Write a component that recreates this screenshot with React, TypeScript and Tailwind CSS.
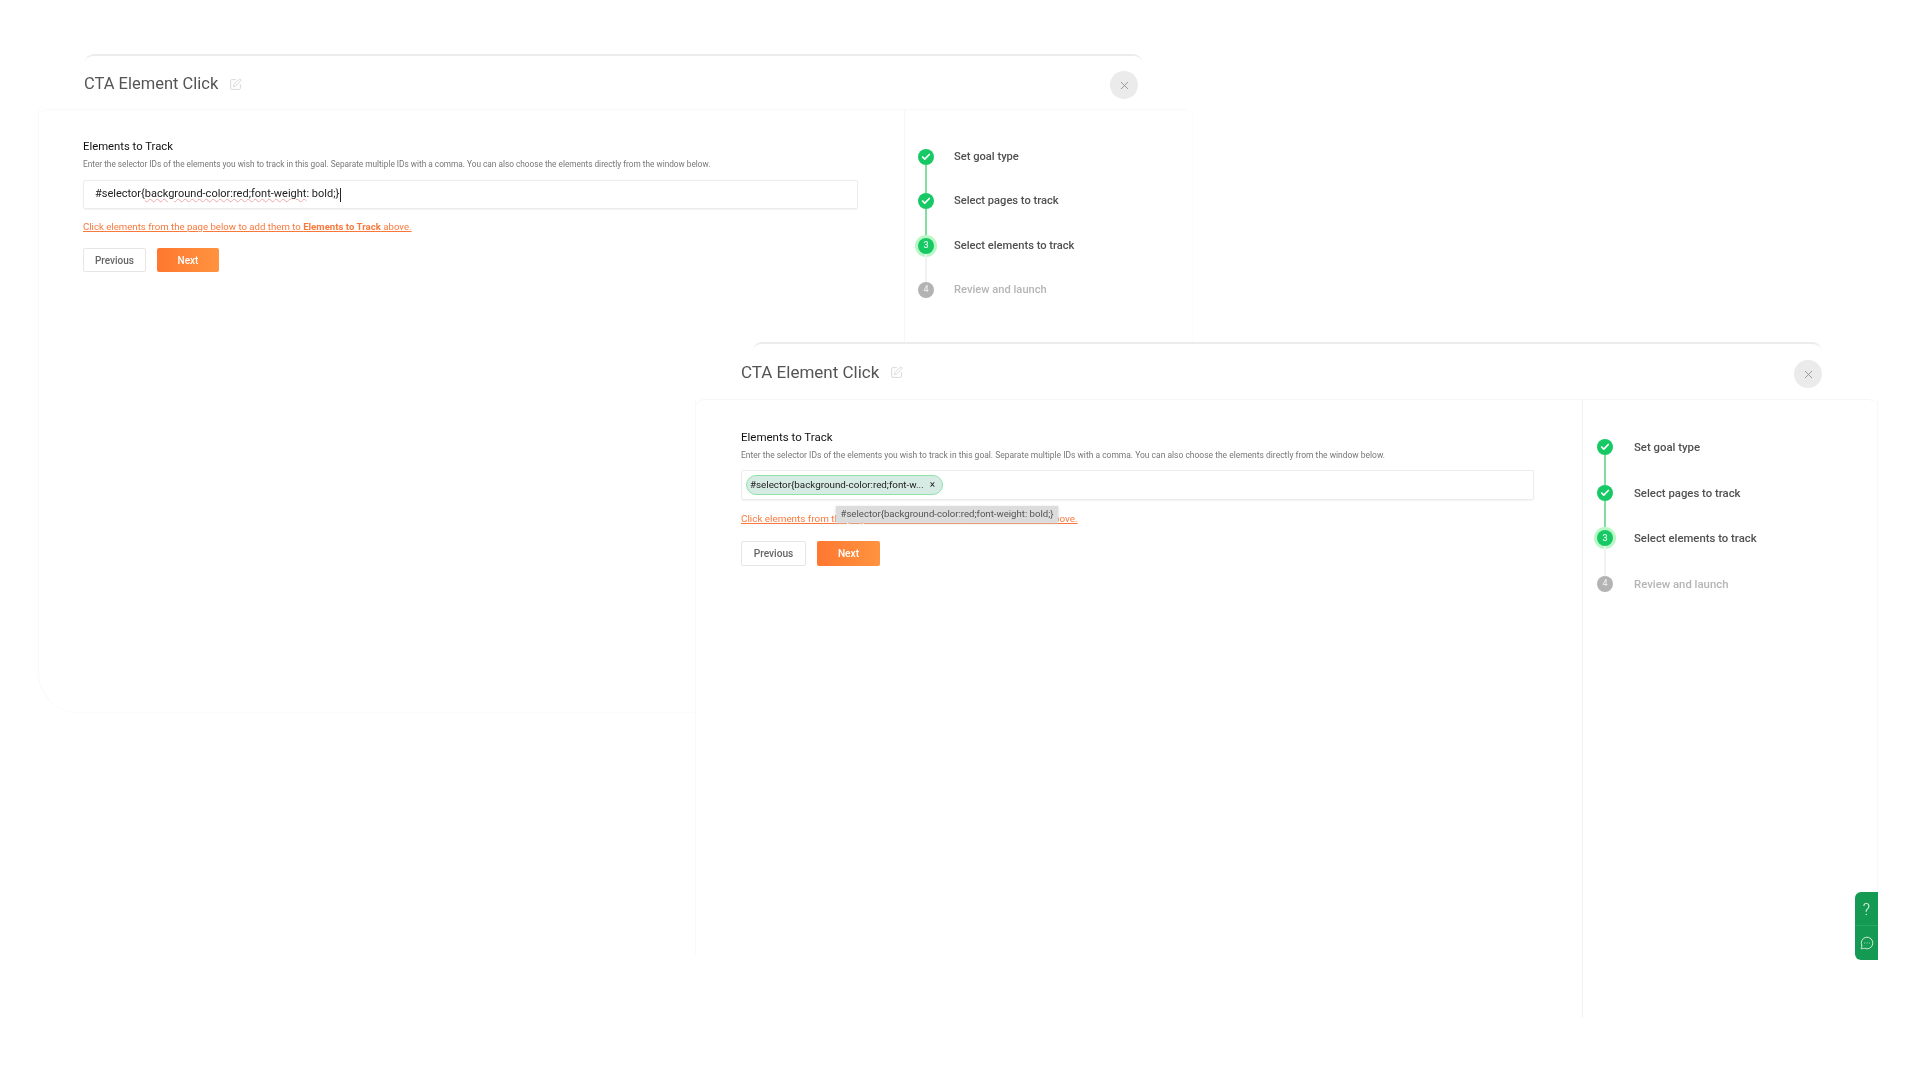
import React from "react";
import { Check, MessageCircleMore, SquarePen, X } from "lucide-react";

type StepProps = { label: string; state: "done" | "current" | "todo"; n: number; line?: string; lineH: string; text: string; gap: string };

function Step({ label, state, n, line, lineH, text, gap }: StepProps) {
  return (
    <div className={`flex items-start ${gap}`}>
      <div className="flex w-4 flex-col items-center">
        <div
          className={
            state === "todo"
              ? "flex h-4 w-4 items-center justify-center rounded-full bg-[#b3b3b3] text-[9px] font-medium text-[#e8e8e8]"
              : state === "current"
                ? "flex h-4 w-4 items-center justify-center rounded-full bg-[#17c964] text-[9px] font-medium text-[#d8f8e4] shadow-[0_0_0_3px_#b9f7c6]"
                : "flex h-4 w-4 items-center justify-center rounded-full bg-[#17c964] text-white"
          }
        >
          {state === "done" ? <Check size={10} strokeWidth={4} /> : n}
        </div>
        {line ? <div className={`w-0.5 ${lineH} ${line}`} /> : null}
      </div>
      <div className={`h-4 font-medium leading-4 ${text} ${state === "todo" ? "text-[#b5b5b5]" : "text-[#505050]"}`}>{label}</div>
    </div>
  );
}

function Steps({ lineH, text, gap }: { lineH: string; text: string; gap: string }) {
  const common = { lineH, text, gap };
  return (
    <div className="flex flex-col">
      <Step {...common} label="Set goal type" state="done" n={1} line="bg-[#7fdf9f]" />
      <Step {...common} label="Select pages to track" state="done" n={2} line="bg-[#7fdf9f]" />
      <Step {...common} label="Select elements to track" state="current" n={3} line="bg-[#f1f1f1]" />
      <Step {...common} label="Review and launch" state="todo" n={4} />
    </div>
  );
}

function Title({ className, icon }: { className: string; icon: number }) {
  return (
    <div className="flex items-center gap-[11px]">
      <span className={`text-[#555] ${className}`}>CTA Element Click</span>
      <SquarePen size={icon} strokeWidth={1.5} className="text-[#cfcfcf]" />
    </div>
  );
}

function CloseButton() {
  return (
    <div className="flex h-7 w-7 items-center justify-center rounded-full bg-[#ebebeb] text-[#8a8a8a]">
      <X size={13} strokeWidth={1.5} />
    </div>
  );
}

export default function App() {
  return (
    <div className="relative h-[1080px] w-[1920px] overflow-hidden bg-white font-['Roboto',sans-serif] blur-[0.3px]">
      {/* Back window */}
      <section className="absolute left-[38px] top-[54px] w-[1155px]">
        <div className="ml-[46px] mr-[50px] flex h-[55px] items-start justify-between rounded-t-[10px] border-t-2 border-[#ececec] pt-[15px]">
          <div className="mt-[1px]">
            <Title className="text-[16.5px] leading-6" icon={13} />
          </div>
          <div className="mr-[5px]"><CloseButton /></div>
        </div>
        <div className="flex h-[603px] items-start rounded-t-[10px] border-t border-[#f8f8f8]">
          <div className="h-[603px] w-[866px] shrink-0 rounded-bl-[40px] border-b border-l border-[#fcfcfc] border-l-[#f8f8f8] pl-[44px] pt-[29px]">
            <div className="text-[11.3px] font-normal leading-4 text-[#111]">Elements to Track</div>
            <div className="mt-[2px] text-[8.25px] leading-[14px] text-[#777]">
              Enter the selector IDs of the elements you wish to track in this goal. Separate multiple IDs with a comma. You can also choose the elements directly from the window below.
            </div>
            <div className="mt-[9px] flex h-[29px] w-[775px] items-center rounded-[2px] border border-[#ececec] pl-[11px] text-[11px] text-[#222] shadow-[0_1px_1px_#f4f4f4]">
              #selector{"{"}
              <span className="underline decoration-[#f2a8a8] decoration-wavy decoration-1">background-color:red;font-weight</span>: bold;{"}"}
              <span className="ml-px h-[14px] w-px bg-[#222]" />
            </div>
            <div className="mt-[10px] text-[9.65px] leading-4 text-[#f9793d] underline">
              Click elements from the page below to add them to <b className="font-bold">Elements to Track</b> above.
            </div>
            <div className="mt-[13px] flex gap-[11px]">
              <div className="flex h-6 w-[63px] items-center justify-center rounded-[2px] border border-[#e6e6e6] text-[10px] font-medium text-[#666]">Previous</div>
              <div className="flex h-6 w-[62px] items-center justify-center rounded-[2px] bg-gradient-to-r from-[#ff7730] to-[#ff933f] text-[10px] font-medium text-white">Next</div>
            </div>
          </div>
          <div className="h-[603px] flex-1 border-l border-r border-[#f6f6f6] border-r-[#fcfcfc] pl-[13px] pt-[39px]">
            <Steps lineH="h-[28.3px]" text="text-[11.15px]" gap="gap-[20px]" />
          </div>
        </div>
      </section>

      {/* Front window */}
      <section className="absolute left-[695px] top-[342px] h-[700px] w-[1183px] bg-white">
        <div className="ml-[57px] mr-[56px] flex h-[57px] items-start justify-between rounded-t-[10px] border-t-2 border-[#ececec] pt-[16px]">
          <div className="-ml-[11px]">
            <Title className="text-[17px] leading-6" icon={13} />
          </div>
          <div><CloseButton /></div>
        </div>
        <div className="flex items-start rounded-t-[10px] border-t border-[#f6f6f6]">
          <div className="h-[554px] w-[887px] shrink-0 border-l border-[#f8f8f8] pl-[45px] pt-[29px]">
            <div className="text-[11.5px] font-normal leading-4 text-[#111]">Elements to Track</div>
            <div className="mt-[3px] text-[8.48px] leading-[14px] text-[#777]">
              Enter the selector IDs of the elements you wish to track in this goal. Separate multiple IDs with a comma. You can also choose the elements directly from the window below.
            </div>
            <div className="relative mt-[8px] flex h-[30px] w-[793px] items-center rounded-[2px] border border-[#ececec] pl-[4px] shadow-[0_1px_1px_#f4f4f4]">
              <div className="flex h-5 w-[197px] items-center whitespace-nowrap rounded-full border border-[#8fe3a9] bg-[#d6ebe3] pl-[3px] text-[9.8px] text-[#222]">
                <span>#selector{"{"}background-color:red;font-w...</span>
                <span className="ml-[6px] text-[10px] leading-none">×</span>
              </div>
              <div className="absolute left-[94px] top-[35px] z-10 flex h-4 w-[222px] items-center justify-center whitespace-nowrap bg-[#dcdcdc] text-[9.6px] text-[#555] shadow-[0_1px_3px_#cfcfcf]">
                #selector{"{"}background-color:red;font-weight: bold;{"}"}
              </div>
            </div>
            <div className="mt-[11px] text-[9.9px] leading-4 text-[#f9793d] underline">
              Click elements from the page below to add them to <b className="font-medium">Elements to Track</b> above.
            </div>
            <div className="mt-[14px] flex gap-[11px]">
              <div className="flex h-[25px] w-[65px] items-center justify-center rounded-[2px] border border-[#e6e6e6] text-[10.2px] font-medium text-[#666]">Previous</div>
              <div className="flex h-[25px] w-[63px] items-center justify-center rounded-[2px] bg-gradient-to-r from-[#ff7730] to-[#ff933f] text-[10.2px] font-medium text-white">Next</div>
            </div>
          </div>
          <div className="h-[618px] flex-1 border-l border-[#f1f1f1] pl-[14px] pt-[39px]">
            <Steps lineH="h-[29.7px]" text="text-[11.35px]" gap="gap-[21px]" />
          </div>
        </div>
      </section>
      <div className="absolute right-[42px] top-[399px] h-[494px] w-px bg-[#f8f8f8]" />

      {/* Help widget */}
      <div className="absolute left-[1855px] top-[892px] flex h-[68px] w-[23px] flex-col rounded-l-[6px] bg-[#149a52] text-[#e4f4ea]">
        <div className="flex h-[34px] items-center justify-center border-b border-[#2aa862] pt-[2px] text-[16px] font-light leading-none">?</div>
        <div className="flex flex-1 items-center justify-center"><MessageCircleMore size={14} strokeWidth={1.5} /></div>
      </div>
    </div>
  );
}
